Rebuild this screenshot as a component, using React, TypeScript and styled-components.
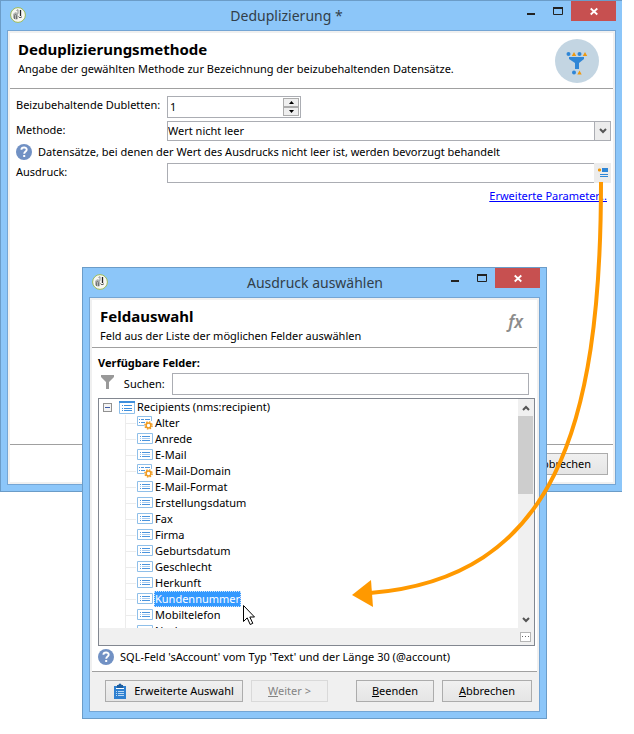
import React from "react";
import styled, { createGlobalStyle, css } from "styled-components";

const GlobalStyle = createGlobalStyle`
  * { box-sizing: border-box; }
  body { margin: 0; background: #fff; }
  body, button, input, select {
    font-family: "Noto Sans", "Open Sans", sans-serif;
    font-size: 11px;
    line-height: 16px;
    color: #000;
  }
`;

const Desktop = styled.main`
  position: relative;
  display: grid;
  align-items: start;
  padding-bottom: 15px;
  overflow: hidden;
`;

const Win = styled.section<{ $kind: "main" | "dialog" }>`
  grid-area: 1 / 1;
  display: flex;
  flex-direction: column;
  min-width: 0;
  background: #8cc6f9;
  border: 1px solid #6b9cc8;
  ${(p) =>
    p.$kind === "main"
      ? css`
          min-height: 492px;
          margin-right: 12px;
          border-right: 0;
        `
      : css`
          z-index: 1;
          margin: 267px 87px 0 82px;
        `}
`;

const TitleBar = styled.header<{ $shifted?: boolean }>`
  display: grid;
  grid-template-columns: 99px 1fr 99px;
  height: 29px;
  padding: 0 6px 0 7px;
  ${(p) => p.$shifted && css`grid-template-columns: 48px 1fr 99px;`}
`;

const AppIcon = styled.svg`
  width: 16px;
  height: 16px;
  margin: 6px 0 0 2px;
`;

const WinTitle = styled.h1`
  margin: 0;
  padding-top: 5px;
  font-size: 14px;
  font-weight: 400;
  line-height: 20px;
  text-align: center;
  white-space: nowrap;
  color: #323e49;
`;

const Controls = styled.div`
  display: flex;
  justify-content: flex-end;
`;

const ControlButton = styled.button<{ $close?: boolean }>`
  display: block;
  width: ${(p) => (p.$close ? 45 : 27)}px;
  height: 20px;
  padding: 0;
  border: 0;
  background: ${(p) => (p.$close ? "#c75050" : "transparent")};
  svg { display: block; margin: auto; }
`;

const Client = styled.div`
  display: flex;
  flex: 1;
  flex-direction: column;
  margin: 0 6px;
  margin-bottom: 6px;
  padding: 2px;
  border: 1px solid #74a5d4;
  background: #f0f0f0;
`;

const PageHead = styled.div<{ $height: number }>`
  display: flex;
  justify-content: space-between;
  height: ${(p) => p.$height}px;
  padding: 6px 14px 0 8px;
  border-bottom: 1px solid #a0a0a0;
  background: #fff;
`;

const Heading = styled.h2`
  margin: 0;
  font-size: 15px;
  line-height: 20px;
  font-weight: 700;
`;

const Sub = styled.p`
  margin: 2px 0 0;
  white-space: nowrap;
`;

const Body = styled.div`
  flex: 1;
  background: #fff;
`;

const Form = styled.form`
  display: grid;
  grid-template-columns: 151px 1fr;
  row-gap: 3px;
  padding: 7px 2px 0 6px;
`;

const Label = styled.label`
  padding-top: 1px;
  white-space: nowrap;
`;

const Spin = styled.div`
  display: flex;
  width: 134px;
  height: 22px;
  padding: 1px;
  border: 1px solid #abadb3;
`;

const BareInput = styled.input`
  flex: 1;
  min-width: 0;
  padding: 0 1px;
  border: 0;
  outline: 0;
  background: transparent;
`;

const SpinButtons = styled.div`
  display: flex;
  flex-direction: column;
  width: 16px;
  button {
    display: grid;
    flex: 1;
    place-items: center;
    padding: 0;
    border: 1px solid #acacac;
    background: #efefef;
  }
`;

const Combo = styled.div`
  display: flex;
  position: relative;
  height: 20px;
  border: 1px solid #abadb3;
  select {
    flex: 1;
    width: 100%;
    padding: 0;
    border: 0;
    appearance: none;
    background: #fff;
  }
`;

const ComboArrow = styled.span`
  display: grid;
  place-items: center;
  width: 16px;
  border-left: 1px solid #abadb3;
  background: #ececec;
  pointer-events: none;
`;

const Hint = styled.div<{ $dialog?: boolean }>`
  display: flex;
  grid-column: 1 / -1;
  align-items: center;
  gap: 6px;
  height: 16px;
  white-space: nowrap;
  ${(p) => p.$dialog && css`margin: 3px 0 6px 6px;`}
`;

const ExpressionBox = styled.div`
  display: flex;
  height: 20px;
  border: 1px solid #abadb3;
  border-right: 0;
`;

const PickButton = styled.button`
  display: grid;
  place-items: center;
  width: 17px;
  margin: -1px 0;
  padding: 0;
  border: 0;
  background: #ececec;
`;

const Link = styled.a`
  grid-column: 1 / -1;
  justify-self: end;
  margin: 2px 4px 0 0;
  color: #0000ff;
  text-decoration: underline;
`;

const MainFooter = styled.footer`
  display: flex;
  justify-content: flex-end;
  padding: 8px 5px 7px;
  border-top: 1px solid #a0a0a0;
  background: #fff;
`;

const PushButton = styled.button<{ $width: number }>`
  display: inline-flex;
  align-items: center;
  justify-content: center;
  gap: 8px;
  width: ${(p) => p.$width}px;
  height: 22px;
  padding: 0;
  border: 1px solid #acacac;
  background: linear-gradient(#f0f0f0, #e5e5e5);
  white-space: nowrap;
  &:disabled {
    color: #838383;
    border-color: #d9d9d9;
    background: #efefef;
  }
`;

const FieldsTitle = styled.h3`
  margin: 0;
  padding: 7px 6px 0;
  font-size: 11px;
  line-height: 16px;
  font-weight: 700;
`;

const SearchRow = styled.div`
  display: grid;
  grid-template-columns: 23px 51px 1fr;
  align-items: center;
  padding: 2px 8px 3px 6px;
  svg { margin-bottom: 4px; }
  input {
    width: 100%;
    height: 22px;
    padding: 0 3px;
    border: 1px solid #abadb3;
    outline: 0;
  }
`;

const ListFrame = styled.div`
  display: grid;
  grid-template-columns: 1fr 16px;
  grid-template-rows: 229px 17px;
  margin: 0 2px 0 6px;
  border: 1px solid #828790;
  background: #f0f0f0;
`;

const Tree = styled.ul`
  margin: 0;
  padding: 0;
  overflow: hidden;
  list-style: none;
  background: #fff;
`;

const Branch = styled.ul`
  margin: 0 0 0 26px;
  padding: 0;
  border-left: 1px solid #ececec;
  list-style: none;
`;

const TreeRow = styled.div<{ $root?: boolean }>`
  display: flex;
  align-items: center;
  height: 16px;
  white-space: nowrap;
  ${(p) =>
    p.$root
      ? css`padding-left: 4px;`
      : css`
          &::before {
            content: "";
            width: 10px;
            margin-right: 1px;
            border-top: 1px solid #ececec;
          }
        `}
`;

const Toggle = styled.button`
  display: grid;
  place-items: center;
  width: 9px;
  height: 9px;
  margin-right: 7px;
  padding: 0;
  border: 1px solid #919191;
  background: #f4f4f4;
`;

const NodeName = styled.span<{ $selected?: boolean }>`
  height: 16px;
  padding: 0 1px;
  margin-left: 1px;
  line-height: 16px;
  ${(p) =>
    p.$selected &&
    css`
      color: #fff;
      background: #3399ff;
      outline: 1px dotted #cfe5fb;
      outline-offset: -1px;
    `}
`;

const ScrollBar = styled.div`
  display: flex;
  flex-direction: column;
  background: #f0f0f0;
  button {
    display: grid;
    place-items: center;
    height: 17px;
    padding: 0;
    border: 0;
    background: transparent;
  }
`;

const Track = styled.div`
  flex: 1;
`;

const Thumb = styled.div`
  height: 78px;
  margin-right: 1px;
  background: #cdcdcd;
`;

const MoreButton = styled.button`
  grid-column: 2;
  display: grid;
  place-items: center;
  align-self: center;
  width: 11px;
  height: 10px;
  margin-left: 2px;
  padding: 0;
  border: 1px solid #b5b5b5;
  background: #fff;
`;

const DialogFooter = styled.footer`
  display: flex;
  gap: 8px;
  padding: 8px 5px 7px 13px;
  border-top: 1px solid #a0a0a0;
  background: #f0f0f0;
`;

const Spacer = styled.span`
  flex: 1;
`;

const FxMark = styled.span`
  padding-top: 6px;
  font-size: 17px;
  line-height: 20px;
  font-style: italic;
  font-weight: 600;
  color: #8c8c8c;
`;

const Overlay = styled.svg<{ $layer: "arrow" | "cursor" }>`
  position: absolute;
  z-index: 2;
  pointer-events: none;
  ${(p) =>
    p.$layer === "arrow"
      ? css`
          top: 180px;
          right: 24px;
        `
      : css`
          top: 604px;
          left: 242px;
        `}
`;

const Logo = () => (
  <AppIcon viewBox="0 0 16 16" aria-hidden="true">
    <circle cx="8" cy="8" r="7.4" fill="#f7f7f2" stroke="#9cba57" />
    <path d="M3 7l2.500-2L8 6.200V12l-2 .8L3 11z" fill="#b4b6b4" />
    <path d="M4.500 12V8.500C4.500 7 6.500 7 6.500 8.500V12" fill="none" stroke="#6f7273" />
    <path d="M6.500 3.500l1.500-.8v4" fill="none" stroke="#8c8f90" />
    <path d="M10.500 3v6" stroke="#222" strokeWidth="1.300" />
    <path d="M8.500 9.500c.5 1.500 2.500 1.500 3.500 0" fill="none" stroke="#555" />
  </AppIcon>
);

const HelpIcon = () => (
  <svg width="16" height="16" viewBox="0 0 16 16" aria-hidden="true">
    <circle cx="8" cy="8" r="8" fill="#7191c4" />
    <path d="M5.4 5.8C5.5 2.8 10.7 2.7 10.7 5.7c0 1.8-2.5 1.8-2.5 4" fill="none" stroke="#fff" strokeWidth="1.9" />
    <path d="M7.2 11h2v2h-2z" fill="#fff" />
  </svg>
);

const FunnelBadge = () => (
  <svg width="44" height="44" viewBox="0 0 44 44" aria-hidden="true">
    <circle cx="22" cy="22" r="22" fill="#c3d5e2" />
    <g fill="#2f86d6">
      <circle cx="13.5" cy="15" r="2" />
      <circle cx="24.5" cy="15" r="2" />
      <circle cx="19" cy="33.5" r="2" />
      <path d="M14 18h15v2l-5 4v6h-4v-6l-6-4z" />
    </g>
    <path d="M19 13l2.200 4h-4.400zM30 13l2.200 4h-4.400zM24.500 31.500l2.200 4h-4.400z" fill="#f0980c" />
  </svg>
);

const Chevron = ({ up }: { up?: boolean }) => (
  <svg width="8" height="6" viewBox="0 0 8 6" aria-hidden="true">
    <path d={up ? "M1 5l3-3 3 3" : "M1 1l3 3 3-3"} fill="none" stroke="#555" strokeWidth="2" />
  </svg>
);

const SpinArrow = ({ up }: { up?: boolean }) => (
  <svg width="5" height="3" viewBox="0 0 5 3" aria-hidden="true">
    <path d={up ? "M0 3l2.500-3L5 3z" : "M0 0l2.500 3L5 0z"} fill="#000" />
  </svg>
);

const TableIcon = () => (
  <svg width="16" height="14" viewBox="0 0 16 14" aria-hidden="true">
    <path d="M.5 1.500h15v12H.5z" fill="#fff" stroke="#8fbfe9" />
    <path d="M0 1h16v2H0z" fill="#3f8fdc" />
    <path d="M3 5.500h1M5 5.500h8M3 8.500h1M5 8.500h8M3 10.500h1M5 10.500h8" stroke="#3f8fdc" />
  </svg>
);

const FieldIcon = () => (
  <svg width="16" height="14" viewBox="0 0 16 14" aria-hidden="true">
    <path d="M.5 1.500h15v10H.5z" fill="#fff" stroke="#8fbfe9" />
    <path d="M3 4.500h1M5 4.500h8M3 8.500h1M5 8.500h8" stroke="#4b94dd" />
    <path d="M3 6.500h1M5 6.500h8" stroke="#a6cbf0" />
  </svg>
);

const ComputedFieldIcon = () => (
  <svg width="16" height="14" viewBox="0 0 16 14" aria-hidden="true">
    <path d="M7.500 9.500H.5v-9h14V5" fill="#fff" stroke="#8fbfe9" />
    <path d="M2 3.500h1M4 3.500h3M8 3.500h5M2 6.500h1M4 6.500h4" stroke="#4b94dd" />
    <circle cx="11.500" cy="9.500" r="3.600" fill="none" stroke="#ee9a20" strokeWidth="1.400" strokeDasharray="1.500 1.330" />
    <circle cx="11.500" cy="9.500" r="2.400" fill="#fff" stroke="#ee9a20" strokeWidth="1.500" />
  </svg>
);

const WindowControls = () => (
  <Controls>
    <ControlButton type="button" aria-label="Minimieren">
      <svg width="8" height="20" viewBox="0 0 8 20"><path d="M0 12h8v2H0z" fill="#222" /></svg>
    </ControlButton>
    <ControlButton type="button" aria-label="Maximieren">
      <svg width="10" height="20" viewBox="0 0 10 20">
        <path d="M.5 6.500h9v7h-9z" fill="none" stroke="#222" />
        <path d="M0 6h10v2H0z" fill="#222" />
      </svg>
    </ControlButton>
    <ControlButton $close type="button" aria-label="Schließen">
      <svg width="8" height="20" viewBox="0 0 8 20">
        <path d="M.7 7.500l6.600 6M7.300 7.500l-6.600 6" stroke="#fff" strokeWidth="1.800" />
      </svg>
    </ControlButton>
  </Controls>
);

const fields = [
  { name: "Alter", computed: true },
  { name: "Anrede" },
  { name: "E-Mail" },
  { name: "E-Mail-Domain", computed: true },
  { name: "E-Mail-Format" },
  { name: "Erstellungsdatum" },
  { name: "Fax" },
  { name: "Firma" },
  { name: "Geburtsdatum" },
  { name: "Geschlecht" },
  { name: "Herkunft" },
  { name: "Kundennummer", selected: true },
  { name: "Mobiltelefon" },
  { name: "Nachname" },
];

const MainWindow = () => (
  <Win $kind="main">
    <TitleBar $shifted>
      <Logo />
      <WinTitle>Deduplizierung *</WinTitle>
      <WindowControls />
    </TitleBar>
    <Client>
      <PageHead $height={56}>
        <div>
          <Heading>Deduplizierungsmethode</Heading>
          <Sub>Angabe der gewählten Methode zur Bezeichnung der beizubehaltenden Datensätze.</Sub>
        </div>
        <FunnelBadge />
      </PageHead>
      <Body>
        <Form>
          <Label htmlFor="count">Beizubehaltende Dubletten:</Label>
          <Spin>
            <BareInput id="count" defaultValue="1" />
            <SpinButtons>
              <button type="button" aria-label="Erhöhen"><SpinArrow up /></button>
              <button type="button" aria-label="Verringern"><SpinArrow /></button>
            </SpinButtons>
          </Spin>
          <Label htmlFor="method">Methode:</Label>
          <Combo>
            <select id="method"><option>Wert nicht leer</option></select>
            <ComboArrow><Chevron /></ComboArrow>
          </Combo>
          <Hint>
            <HelpIcon />
            <span>Datensätze, bei denen der Wert des Ausdrucks nicht leer ist, werden bevorzugt behandelt</span>
          </Hint>
          <Label htmlFor="expression">Ausdruck:</Label>
          <ExpressionBox>
            <BareInput id="expression" />
            <PickButton type="button" aria-label="Ausdruck auswählen">
              <svg width="12" height="12" viewBox="0 0 12 12">
                <path d="M5 1h6v4H5z" fill="#2f86d6" />
                <path d="M3 7.500h8M3 9.500h8" stroke="#2f86d6" />
                <path d="M1 3h3M2.500 1.500v3" stroke="#f0980c" strokeWidth="2" />
              </svg>
            </PickButton>
          </ExpressionBox>
          <Link href="#parameter">Erweiterte Parameter...</Link>
        </Form>
      </Body>
      <MainFooter>
        <PushButton type="button" $width={90}><span><u>A</u>bbrechen</span></PushButton>
      </MainFooter>
    </Client>
  </Win>
);

const FieldDialog = () => (
  <Win $kind="dialog" role="dialog" aria-label="Ausdruck auswählen">
    <TitleBar>
      <Logo />
      <WinTitle>Ausdruck auswählen</WinTitle>
      <WindowControls />
    </TitleBar>
    <Client>
      <PageHead $height={48}>
        <div>
          <Heading>Feldauswahl</Heading>
          <Sub>Feld aus der Liste der möglichen Felder auswählen</Sub>
        </div>
        <FxMark>fx</FxMark>
      </PageHead>
      <Body>
        <FieldsTitle>Verfügbare Felder:</FieldsTitle>
        <SearchRow>
          <svg width="20" height="16" viewBox="0 0 20 16" aria-hidden="true">
            <path d="M3 1h13v2l-5 5v7H8V8L3 3z" fill="#999" />
          </svg>
          <label htmlFor="search">&nbsp;Suchen:</label>
          <input id="search" />
        </SearchRow>
        <ListFrame>
          <Tree role="tree" aria-label="Verfügbare Felder">
            <li role="treeitem" aria-expanded="true">
              <TreeRow $root>
                <Toggle type="button" aria-label="Zuklappen">
                  <svg width="5" height="1" viewBox="0 0 5 1"><path d="M0 0h5v1H0z" fill="#3c5aa8" /></svg>
                </Toggle>
                <TableIcon />
                <NodeName>Recipients (nms:recipient)</NodeName>
              </TreeRow>
              <Branch role="group">
                {fields.map((f) => (
                  <li key={f.name} role="treeitem" aria-selected={!!f.selected}>
                    <TreeRow>
                      {f.computed ? <ComputedFieldIcon /> : <FieldIcon />}
                      <NodeName $selected={f.selected}>{f.name}</NodeName>
                    </TreeRow>
                  </li>
                ))}
              </Branch>
            </li>
          </Tree>
          <ScrollBar>
            <button type="button" aria-label="Nach oben"><Chevron up /></button>
            <Track><Thumb /></Track>
            <button type="button" aria-label="Nach unten"><Chevron /></button>
          </ScrollBar>
          <MoreButton type="button" aria-label="Mehr">
            <svg width="7" height="1" viewBox="0 0 7 1"><path d="M0 0h1v1H0zM3 0h1v1H3zM6 0h1v1H6z" fill="#666" /></svg>
          </MoreButton>
        </ListFrame>
        <Hint $dialog>
          <HelpIcon />
          <span>SQL-Feld 'sAccount' vom Typ 'Text' und der Länge 30 (@account)</span>
        </Hint>
      </Body>
      <DialogFooter>
        <PushButton type="button" $width={138}>
          <svg width="12" height="16" viewBox="0 0 12 16" aria-hidden="true">
            <path d="M0 3h12v13H0z" fill="#2f80d0" />
            <path d="M3 2h1.500a1.500 1.500 0 0 1 3 0H9v3H3z" fill="#1d5d9f" />
            <path d="M2 5.500h8" stroke="#fff" />
            <path d="M2 8.500h1M4 8.500h6M2 10.500h1M4 10.500h6M2 12.500h1M4 12.500h6" stroke="#b8d8f4" />
          </svg>
          <span>Erweiterte Auswahl</span>
        </PushButton>
        <PushButton type="button" disabled $width={77}><span><u>W</u>eiter &gt;</span></PushButton>
        <Spacer />
        <PushButton type="button" $width={78}><span><u>B</u>eenden</span></PushButton>
        <PushButton type="button" $width={90}><span><u>A</u>bbrechen</span></PushButton>
      </DialogFooter>
    </Client>
  </Win>
);

export default function App() {
  return (
    <>
      <GlobalStyle />
      <Desktop>
        <MainWindow />
        <FieldDialog />
        <Overlay $layer="arrow" width="260" height="430" viewBox="350 180 260 430" aria-hidden="true">
          <path d="M601 182C601 430 553 578 370 593" fill="none" stroke="#ff9900" strokeWidth="4" />
          <path d="M352 595l19-15 2 27z" fill="#ff9900" />
        </Overlay>
        <Overlay $layer="cursor" width="14" height="22" viewBox="0 0 14 22" aria-hidden="true">
          <path d="M1.500 1.500v16l3.700-3.600 3 6.600 2.600-1.200-3-6.300h4.700z" fill="#fff" stroke="#000" />
        </Overlay>
      </Desktop>
    </>
  );
}
